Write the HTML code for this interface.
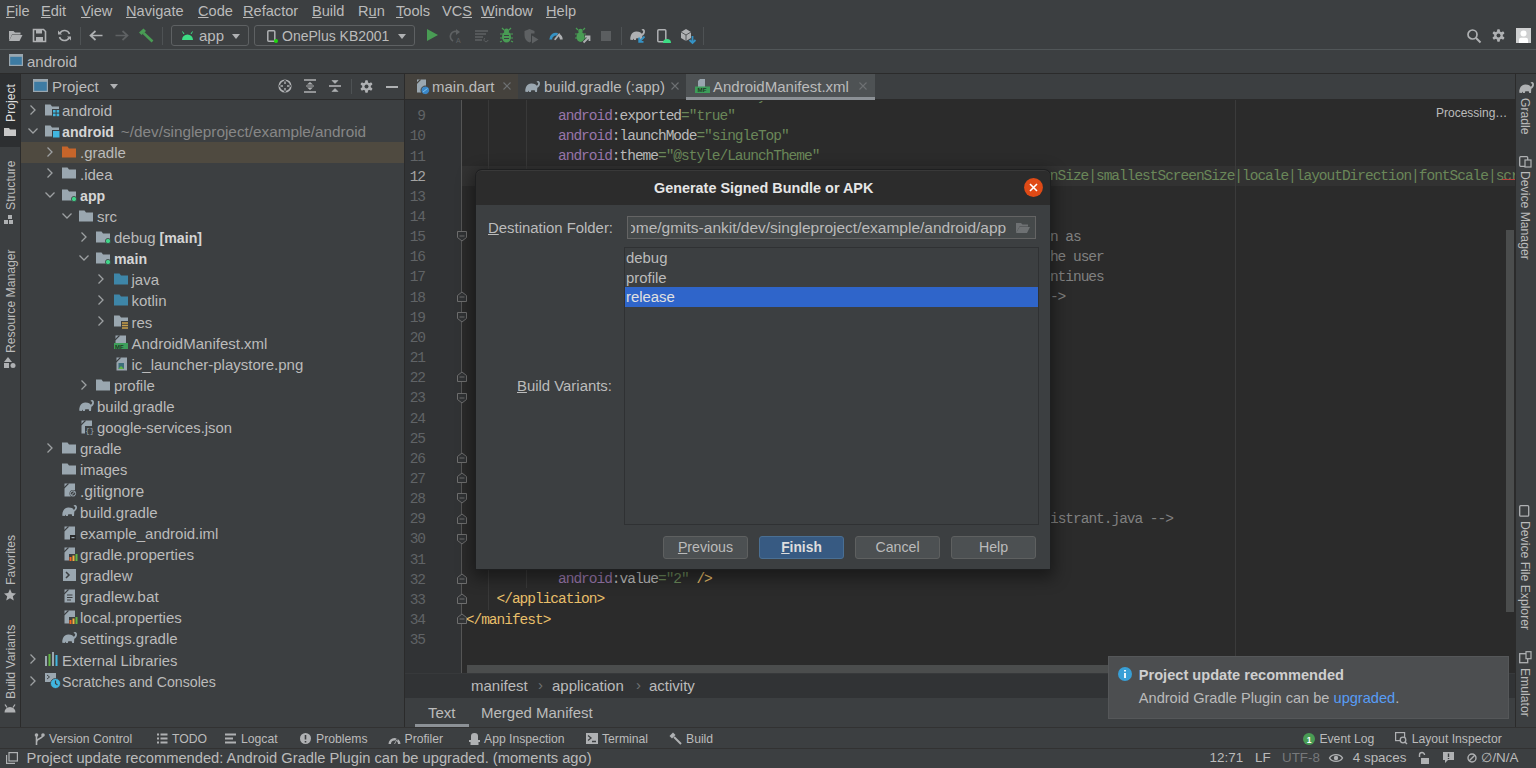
<!DOCTYPE html><html><head><meta charset="utf-8"><style>
*{box-sizing:border-box;margin:0;padding:0}
html,body{width:1536px;height:768px;overflow:hidden;background:#3c3f41}
body{position:relative;font-family:"Liberation Sans",sans-serif;font-size:15px;color:#bbbbbb}
.a{position:absolute;white-space:pre}
.m{font-family:"Liberation Mono",monospace}
svg{position:absolute;overflow:visible}
u{text-decoration:underline;text-underline-offset:0.5px;text-decoration-thickness:1px}
</style></head><body>
<div class="a" style="left:6px;top:1.00px;line-height:20px;font-size:14.6px;"><u>F</u>ile</div>
<div class="a" style="left:41px;top:1.00px;line-height:20px;font-size:14.6px;"><u>E</u>dit</div>
<div class="a" style="left:81px;top:1.00px;line-height:20px;font-size:14.6px;"><u>V</u>iew</div>
<div class="a" style="left:126px;top:1.00px;line-height:20px;font-size:14.6px;"><u>N</u>avigate</div>
<div class="a" style="left:198px;top:1.00px;line-height:20px;font-size:14.6px;"><u>C</u>ode</div>
<div class="a" style="left:243px;top:1.00px;line-height:20px;font-size:14.6px;"><u>R</u>efactor</div>
<div class="a" style="left:312px;top:1.00px;line-height:20px;font-size:14.6px;"><u>B</u>uild</div>
<div class="a" style="left:358px;top:1.00px;line-height:20px;font-size:14.6px;">R<u>u</u>n</div>
<div class="a" style="left:396px;top:1.00px;line-height:20px;font-size:14.6px;"><u>T</u>ools</div>
<div class="a" style="left:442px;top:1.00px;line-height:20px;font-size:14.6px;">VC<u>S</u></div>
<div class="a" style="left:481px;top:1.00px;line-height:20px;font-size:14.6px;"><u>W</u>indow</div>
<div class="a" style="left:546px;top:1.00px;line-height:20px;font-size:14.6px;"><u>H</u>elp</div>
<div class="a" style="left:0px;top:49px;width:1536px;height:1px;background:#515658;"></div>
<div class="a" style="left:0px;top:73px;width:1536px;height:1px;background:#2b2b2b;"></div>
<svg style="left:8px;top:29px" width="15" height="13" viewBox="0 0 15 13"><path d="M1 2h4.5l1.5 1.5h5.5v2H4L1 12z" fill="#afb1b3"/><path d="M4 6h10.5l-3 6H1z" fill="#afb1b3"/></svg>
<svg style="left:33px;top:29px" width="13" height="13" viewBox="0 0 13 13"><path d="M0.5 0.5h10l2 2v10h-12z" fill="none" stroke="#afb1b3" stroke-width="1.6"/><rect x="3" y="1" width="6" height="3.5" fill="#afb1b3"/><rect x="3" y="8" width="7" height="4.5" fill="#afb1b3"/></svg>
<svg style="left:58px;top:29px" width="13" height="13" viewBox="0 0 13 13"><path d="M11.5 5A5.2 5.2 0 0 0 2 4.2M1.5 8A5.2 5.2 0 0 0 11 8.8" fill="none" stroke="#afb1b3" stroke-width="1.6"/><path d="M0 1.5v4h4z M13 11.5v-4h-4z" fill="#afb1b3"/></svg>
<div class="a" style="left:80px;top:27px;width:1px;height:18px;background:#4e5254;"></div>
<svg style="left:89px;top:30px" width="14" height="11" viewBox="0 0 14 11"><path d="M13.5 5.5H2M6.5 1L1.5 5.5L6.5 10" fill="none" stroke="#afb1b3" stroke-width="1.7"/></svg>
<svg style="left:115px;top:30px" width="14" height="11" viewBox="0 0 14 11"><path d="M0.5 5.5H12M7.5 1L12.5 5.5L7.5 10" fill="none" stroke="#5e6163" stroke-width="1.7"/></svg>
<svg style="left:138px;top:28px" width="16" height="15" viewBox="0 0 16 15"><path d="M1 4.5L5.5 0.5L8 3L3.5 7z" fill="#499c54"/><path d="M5.5 5L14.5 13.5" stroke="#499c54" stroke-width="2.6"/></svg>
<div class="a" style="left:162px;top:27px;width:1px;height:18px;background:#4e5254;"></div>
<div class="a" style="left:171px;top:25px;width:78px;height:21px;border:1px solid #5e6163;border-radius:3px"></div>
<svg style="left:181px;top:31px" width="13" height="9" viewBox="0 0 13 9"><path d="M1 9a5.5 5.5 0 0 1 11 0z" fill="#3ddc84"/><path d="M3 3L1.5 0.5M10 3L11.5 0.5" stroke="#3ddc84" stroke-width="1"/></svg>
<div class="a" style="left:199px;top:26.00px;line-height:20px;font-size:15px;">app</div>
<svg style="left:231.5px;top:33.5px" width="8" height="5" viewBox="0 0 8 5"><path d="M0 0h8L4 5z" fill="#afb1b3"/></svg>
<div class="a" style="left:254px;top:25px;width:161px;height:21px;border:1px solid #5e6163;border-radius:3px"></div>
<svg style="left:267px;top:30px" width="9" height="13" viewBox="0 0 9 13"><rect x="0.8" y="0.8" width="7" height="10.5" rx="1" fill="none" stroke="#afb1b3" stroke-width="1.5"/><circle cx="9" cy="11" r="2" fill="#1fd80f"/></svg>
<div class="a" style="left:282px;top:26.00px;line-height:20px;font-size:14px;">OnePlus KB2001</div>
<svg style="left:397.5px;top:33.5px" width="8" height="5" viewBox="0 0 8 5"><path d="M0 0h8L4 5z" fill="#afb1b3"/></svg>
<svg style="left:427px;top:29px" width="11" height="12" viewBox="0 0 11 12"><path d="M0 0L11 6L0 12z" fill="#499c54"/></svg>
<svg style="left:449px;top:29px" width="14" height="14" viewBox="0 0 14 14"><path d="M9 3A5 5 0 1 0 4 12" fill="none" stroke="#5e6163" stroke-width="1.6"/><path d="M7 0l4 3-4 3z" fill="#5e6163"/><text x="7" y="14" font-size="7" fill="#5e6163" font-family="Liberation Sans">A</text></svg>
<svg style="left:475px;top:30px" width="14" height="12" viewBox="0 0 14 12"><path d="M0 1h13M0 4h11M0 7h8M0 10h7" stroke="#5e6163" stroke-width="1.4"/><path d="M10 8a2 2 0 1 0 3 2" stroke="#5e6163" fill="none"/></svg>
<svg style="left:500px;top:28px" width="13" height="15" viewBox="0 0 13 15"><ellipse cx="6.5" cy="9" rx="4.5" ry="5.5" fill="#499c54"/><circle cx="6.5" cy="3" r="2.5" fill="#499c54"/><path d="M0 6h13M0 10h13M0 14l2-1M13 14l-2-1M2 0l2 2M11 0l-2 2" stroke="#499c54" stroke-width="1.2"/><path d="M4 7.5h5M4 10.5h5" stroke="#3c3f41" stroke-width="1.2"/></svg>
<svg style="left:524px;top:29px" width="15" height="15" viewBox="0 0 15 15"><path d="M0.5 2L5.5 0L10.5 2V4.5H7V12.5L5.5 13.5C2 12 0.5 9.5 0.5 6z" fill="#5e6163"/><path d="M8 6.5L14.5 10.5L8 14.5z" fill="#5e6163"/></svg>
<svg style="left:549px;top:30px" width="14" height="10" viewBox="0 0 14 10"><path d="M0.3 9.5A6.7 6.7 0 0 1 9 3.1L8 5.7A3.9 3.9 0 0 0 3.1 9.5z" fill="#3592c4"/><path d="M10.6 4A6.7 6.7 0 0 1 13.7 9.5H10.9A3.9 3.9 0 0 0 9.6 6.6z" fill="#afb1b3"/><path d="M6.2 9.3L10.2 4.2" stroke="#afb1b3" stroke-width="1.8" stroke-linecap="round"/></svg>
<svg style="left:575px;top:28px" width="15" height="15" viewBox="0 0 15 15"><ellipse cx="5.5" cy="9" rx="4" ry="5" fill="#499c54"/><circle cx="5.5" cy="3" r="2.3" fill="#499c54"/><path d="M0 6h11M0 10h11M1 0l2 2M10 0l-2 2" stroke="#499c54" stroke-width="1.2"/><path d="M8.5 14.5L14 9M10 8.5h4.5V13" stroke="#afb1b3" stroke-width="1.8" fill="none"/></svg>
<div class="a" style="left:601px;top:31px;width:10px;height:10px;background:#5b5e60;"></div>
<div class="a" style="left:621px;top:27px;width:1px;height:18px;background:#4e5254;"></div>
<svg style="left:630px;top:29px" width="16" height="14" viewBox="0 0 16 14"><path d="M0.3 10.8C0.1 6.5 2 2.8 6.2 2.6C9.5 2.5 11 3.5 12.4 5.5L12 11H10.2L9.7 9.3H6.3L5.8 11H4L3.5 9.5L2.8 11z" fill="#afb1b3"/><path d="M11.2 6.3C13.4 5.2 14.3 3.6 14.1 2C13.9 0.7 12.8 0.5 12.1 1.3" fill="none" stroke="#afb1b3" stroke-width="1.7"/><path d="M14.5 7.5l-5 5M9.2 8.5V12.8h4.3" stroke="#3592c4" stroke-width="1.8" fill="none"/></svg>
<svg style="left:657px;top:29px" width="14" height="14" viewBox="0 0 14 14"><rect x="0.8" y="0.8" width="8" height="12" rx="1" fill="none" stroke="#afb1b3" stroke-width="1.5"/><path d="M6 14a4 4 0 0 1 8 0z" fill="#3ddc84"/></svg>
<svg style="left:680px;top:28px" width="16" height="16" viewBox="0 0 16 16"><path d="M1 4l5-3 5 3v6l-5 3-5-3z" fill="#afb1b3"/><path d="M1 4l5 3 5-3M6 7v6" stroke="#3c3f41" stroke-width="0.8" fill="none"/><path d="M12.5 8v7M9.5 12l3 3 3-3" stroke="#3592c4" stroke-width="1.8" fill="none"/></svg>
<div class="a" style="left:703px;top:27px;width:1px;height:18px;background:#4e5254;"></div>
<svg style="left:1467px;top:29px" width="14" height="14" viewBox="0 0 14 14"><circle cx="5.5" cy="5.5" r="4.5" fill="none" stroke="#afb1b3" stroke-width="1.7"/><path d="M9 9l4.5 4.5" stroke="#afb1b3" stroke-width="2"/></svg>
<svg style="left:1492px;top:29px" width="13" height="13" viewBox="0 0 13 13"><circle cx="6.5" cy="6.5" r="4.3" fill="#afb1b3"/><g fill="#afb1b3"><rect x="5.1" y="0.2" width="2.8" height="12.6" rx="0.8"/><rect x="5.1" y="0.2" width="2.8" height="12.6" rx="0.8" transform="rotate(60 6.5 6.5)"/><rect x="5.1" y="0.2" width="2.8" height="12.6" rx="0.8" transform="rotate(120 6.5 6.5)"/></g><circle cx="6.5" cy="6.5" r="2" fill="#3c3f41"/></svg>
<svg style="left:1516px;top:28px" width="15" height="15" viewBox="0 0 15 15"><rect width="15" height="15" fill="#cfd0d1"/><circle cx="7.5" cy="5.5" r="3" fill="#fff"/><path d="M3 15V11.8Q3 9.8 5 9.8H10Q12 9.8 12 11.8V15z" fill="#fff"/></svg>
<svg style="left:9px;top:54px" width="14" height="12" viewBox="0 0 14 12"><rect x="0.6" y="0.6" width="12.8" height="10.8" fill="#3d7ba3" stroke="#9aa7b0" stroke-width="1.2"/><rect x="1" y="1" width="12" height="1.8" fill="#9aa7b0"/></svg>
<div class="a" style="left:27px;top:52.00px;line-height:20px;font-size:15px;">android</div>
<div class="a" style="left:20px;top:74px;width:1px;height:653px;background:#2b2b2b;"></div>
<div class="a" style="left:0px;top:74px;width:20px;height:73px;background:#2d2f31;"></div>
<div class="a" style="left:11px;top:122px;transform-origin:0 0;transform:rotate(-90deg);font-size:12.2px;line-height:16px;color:#dddddd;margin-top:0"><div style="position:relative;top:-8px">Project</div></div>
<svg style="left:4px;top:128px" width="12" height="8" viewBox="0 0 12 8"><path d="M0 0h5l1 1.5h6V8H0z" fill="#c8c8c8"/></svg>
<div class="a" style="left:11px;top:209.5px;transform-origin:0 0;transform:rotate(-90deg);font-size:12.2px;line-height:16px;color:#bbbbbb;margin-top:0"><div style="position:relative;top:-8px">Structure</div></div>
<svg style="left:4px;top:215px" width="12" height="9" viewBox="0 0 12 9"><rect x="4" y="0" width="4" height="4" fill="#afb1b3"/><rect x="0" y="5" width="4" height="4" fill="#afb1b3"/><rect x="5" y="5" width="4" height="4" fill="#afb1b3"/></svg>
<div class="a" style="left:11px;top:352.5px;transform-origin:0 0;transform:rotate(-90deg);font-size:12.2px;line-height:16px;color:#bbbbbb;margin-top:0"><div style="position:relative;top:-8px">Resource Manager</div></div>
<svg style="left:4px;top:357px" width="12" height="11" viewBox="0 0 12 11"><path d="M4 0l4 5H0z" fill="#afb1b3"/><rect x="0" y="6" width="5" height="5" fill="#afb1b3"/><circle cx="9" cy="8.5" r="2.5" fill="#afb1b3"/></svg>
<div class="a" style="left:11px;top:585px;transform-origin:0 0;transform:rotate(-90deg);font-size:12.2px;line-height:16px;color:#bbbbbb;margin-top:0"><div style="position:relative;top:-8px">Favorites</div></div>
<svg style="left:4px;top:589px" width="12" height="12" viewBox="0 0 12 12"><path d="M6 0l1.8 4 4.2.4-3.2 2.8 1 4.3L6 9.3 2.2 11.5l1-4.3L0 4.4l4.2-.4z" fill="#afb1b3"/></svg>
<div class="a" style="left:11px;top:698.5px;transform-origin:0 0;transform:rotate(-90deg);font-size:12.2px;line-height:16px;color:#bbbbbb;margin-top:0"><div style="position:relative;top:-8px">Build Variants</div></div>
<svg style="left:4px;top:704px" width="12" height="9" viewBox="0 0 12 9"><path d="M0.5 8.5a5.5 5.5 0 0 1 11 0z" fill="#afb1b3"/><path d="M1 0.5l2 3M11 0.5l-2 3" stroke="#afb1b3" stroke-width="1.3"/></svg>
<div class="a" style="left:404px;top:74px;width:1px;height:653px;background:#2b2b2b;"></div>
<div class="a" style="left:21px;top:99px;width:383px;height:1px;background:#2b2b2b;"></div>
<svg style="left:33px;top:79px" width="15" height="13" viewBox="0 0 15 13"><rect x="0.6" y="0.6" width="13.8" height="11.8" fill="#3d7ba3" stroke="#9aa7b0" stroke-width="1.2"/><rect x="1" y="1" width="13" height="1.8" fill="#9aa7b0"/></svg>
<div class="a" style="left:52px;top:76.50px;line-height:20px;font-size:15px;">Project</div>
<svg style="left:110px;top:84px" width="8" height="5" viewBox="0 0 8 5"><path d="M0 0h8L4 5z" fill="#afb1b3"/></svg>
<svg style="left:278px;top:79px" width="14" height="14" viewBox="0 0 14 14"><circle cx="7" cy="7" r="5.8" fill="none" stroke="#afb1b3" stroke-width="1.6"/><path d="M7 1v4.2M7 8.8v4.2M1 7h4.2M8.8 7h4.2" stroke="#3c3f41" stroke-width="1.6"/><path d="M7 2.5v2.5M7 9v2.5M2.5 7h2.5M9 7h2.5" stroke="#afb1b3" stroke-width="1.4"/></svg>
<svg style="left:303px;top:79px" width="14" height="14" viewBox="0 0 14 14"><path d="M1 1h12M1 13h12" stroke="#afb1b3" stroke-width="1.6"/><path d="M4 5.5l3-2.5 3 2.5zM4 8.5l3 2.5 3-2.5z" fill="#afb1b3"/><path d="M3 7h8" stroke="#afb1b3"/></svg>
<svg style="left:328px;top:79px" width="14" height="14" viewBox="0 0 14 14"><path d="M1 7h12" stroke="#afb1b3" stroke-width="1.6"/><path d="M4 1.5l3 3 3-3zM4 12.5l3-3 3 3z" fill="#afb1b3" stroke="#afb1b3" stroke-width="0.6"/></svg>
<div class="a" style="left:351px;top:79px;width:1px;height:15px;background:#4e5254;"></div>
<svg style="left:360px;top:80px" width="13" height="13" viewBox="0 0 13 13"><circle cx="6.5" cy="6.5" r="4.3" fill="#afb1b3"/><g fill="#afb1b3"><rect x="5.1" y="0.2" width="2.8" height="12.6" rx="0.8"/><rect x="5.1" y="0.2" width="2.8" height="12.6" rx="0.8" transform="rotate(60 6.5 6.5)"/><rect x="5.1" y="0.2" width="2.8" height="12.6" rx="0.8" transform="rotate(120 6.5 6.5)"/></g><circle cx="6.5" cy="6.5" r="2" fill="#3c3f41"/></svg>
<div class="a" style="left:386px;top:86px;width:12px;height:2px;background:#afb1b3;"></div>
<div class="a" style="left:21px;top:142px;width:383px;height:21px;background:#4f4a40;"></div>
<svg style="left:30px;top:105.00px" width="6" height="10" viewBox="0 0 6 10"><path d="M0.5 0.5L5 5L0.5 9.5" fill="none" stroke="#9da0a2" stroke-width="1.3"/></svg>
<svg style="left:45px;top:104.00px" width="14" height="12" viewBox="0 0 14 12"><path d="M0 0.5h5.5l1.5 2H14V11.5H0z" fill="#9aa7b0"/></svg>
<svg style="left:52px;top:109.00px" width="8" height="8"><rect x="0" y="0" width="8" height="8" fill="#3c3f41"/><rect x="1" y="1" width="2.6" height="2.6" fill="#40b6e0"/><rect x="4.6" y="1" width="2.6" height="2.6" fill="#40b6e0"/><rect x="1" y="4.6" width="2.6" height="2.6" fill="#40b6e0"/><rect x="4.6" y="4.6" width="2.6" height="2.6" fill="#40b6e0"/></svg>
<div class="a" style="left:62px;top:101.20px;line-height:20px;font-size:15px;">android</div>
<svg style="left:28px;top:128.13px" width="10" height="6" viewBox="0 0 10 6"><path d="M0.5 0.5L5 5L9.5 0.5" fill="none" stroke="#9da0a2" stroke-width="1.3"/></svg>
<svg style="left:45px;top:125.13px" width="14" height="12" viewBox="0 0 14 12"><path d="M0 0.5h5.5l1.5 2H14V11.5H0z" fill="#9aa7b0"/></svg>
<svg style="left:52px;top:130.13px" width="8" height="8"><rect x="0" y="0" width="8" height="8" fill="#3c3f41"/><rect x="1" y="1" width="6.5" height="6.5" fill="#40b6e0"/></svg>
<div class="a" style="left:62px;top:122.33px;line-height:20px;font-size:15px;"><b style="color:#d5d5d5;font-size:14.2px">android</b><span style="position:absolute;left:58.8px;top:0;color:#878787;font-size:15.3px">~/dev/singleproject/example/android</span></div>
<svg style="left:47px;top:147.26px" width="6" height="10" viewBox="0 0 6 10"><path d="M0.5 0.5L5 5L0.5 9.5" fill="none" stroke="#9da0a2" stroke-width="1.3"/></svg>
<svg style="left:62px;top:146.26px" width="14" height="12" viewBox="0 0 14 12"><path d="M0 0.5h5.5l1.5 2H14V11.5H0z" fill="#c7652a"/></svg>
<div class="a" style="left:80px;top:143.46px;line-height:20px;font-size:15px;">.gradle</div>
<svg style="left:47px;top:168.39px" width="6" height="10" viewBox="0 0 6 10"><path d="M0.5 0.5L5 5L0.5 9.5" fill="none" stroke="#9da0a2" stroke-width="1.3"/></svg>
<svg style="left:62px;top:167.39px" width="14" height="12" viewBox="0 0 14 12"><path d="M0 0.5h5.5l1.5 2H14V11.5H0z" fill="#9aa7b0"/></svg>
<div class="a" style="left:80px;top:164.59px;line-height:20px;font-size:15px;">.idea</div>
<svg style="left:45px;top:191.52px" width="10" height="6" viewBox="0 0 10 6"><path d="M0.5 0.5L5 5L9.5 0.5" fill="none" stroke="#9da0a2" stroke-width="1.3"/></svg>
<svg style="left:62px;top:188.52px" width="14" height="12" viewBox="0 0 14 12"><path d="M0 0.5h5.5l1.5 2H14V11.5H0z" fill="#9aa7b0"/></svg>
<svg style="left:71px;top:195.52px" width="6" height="6"><circle cx="3" cy="3" r="2.6" fill="#3fd68a" stroke="#3c3f41" stroke-width="0.8"/></svg>
<div class="a" style="left:80px;top:185.72px;line-height:20px;font-size:15px;"><b style="color:#d5d5d5;font-size:14.2px">app</b></div>
<svg style="left:62px;top:212.65px" width="10" height="6" viewBox="0 0 10 6"><path d="M0.5 0.5L5 5L9.5 0.5" fill="none" stroke="#9da0a2" stroke-width="1.3"/></svg>
<svg style="left:79px;top:209.65px" width="14" height="12" viewBox="0 0 14 12"><path d="M0 0.5h5.5l1.5 2H14V11.5H0z" fill="#9aa7b0"/></svg>
<div class="a" style="left:97px;top:206.85px;line-height:20px;font-size:15px;">src</div>
<svg style="left:81px;top:231.78px" width="6" height="10" viewBox="0 0 6 10"><path d="M0.5 0.5L5 5L0.5 9.5" fill="none" stroke="#9da0a2" stroke-width="1.3"/></svg>
<svg style="left:96px;top:230.78px" width="14" height="12" viewBox="0 0 14 12"><path d="M0 0.5h5.5l1.5 2H14V11.5H0z" fill="#9aa7b0"/></svg>
<svg style="left:105px;top:237.78px" width="6" height="6"><circle cx="3" cy="3" r="2.6" fill="#3fd68a" stroke="#3c3f41" stroke-width="0.8"/></svg>
<div class="a" style="left:114px;top:227.98px;line-height:20px;font-size:15px;">debug<b style="position:absolute;left:45.5px;top:0;color:#d5d5d5;font-size:14.2px">[main]</b></div>
<svg style="left:79px;top:254.91px" width="10" height="6" viewBox="0 0 10 6"><path d="M0.5 0.5L5 5L9.5 0.5" fill="none" stroke="#9da0a2" stroke-width="1.3"/></svg>
<svg style="left:96px;top:251.91px" width="14" height="12" viewBox="0 0 14 12"><path d="M0 0.5h5.5l1.5 2H14V11.5H0z" fill="#9aa7b0"/></svg>
<svg style="left:105px;top:258.91px" width="6" height="6"><circle cx="3" cy="3" r="2.6" fill="#3fd68a" stroke="#3c3f41" stroke-width="0.8"/></svg>
<div class="a" style="left:114px;top:249.11px;line-height:20px;font-size:15px;"><b style="color:#d5d5d5;font-size:14.2px">main</b></div>
<svg style="left:98px;top:274.04px" width="6" height="10" viewBox="0 0 6 10"><path d="M0.5 0.5L5 5L0.5 9.5" fill="none" stroke="#9da0a2" stroke-width="1.3"/></svg>
<svg style="left:114px;top:273.04px" width="14" height="12" viewBox="0 0 14 12"><path d="M0 0.5h5.5l1.5 2H14V11.5H0z" fill="#3e86a8"/></svg>
<div class="a" style="left:131.5px;top:270.24px;line-height:20px;font-size:15px;">java</div>
<svg style="left:98px;top:295.17px" width="6" height="10" viewBox="0 0 6 10"><path d="M0.5 0.5L5 5L0.5 9.5" fill="none" stroke="#9da0a2" stroke-width="1.3"/></svg>
<svg style="left:114px;top:294.17px" width="14" height="12" viewBox="0 0 14 12"><path d="M0 0.5h5.5l1.5 2H14V11.5H0z" fill="#3e86a8"/></svg>
<div class="a" style="left:131.5px;top:291.37px;line-height:20px;font-size:15px;">kotlin</div>
<svg style="left:98px;top:316.30px" width="6" height="10" viewBox="0 0 6 10"><path d="M0.5 0.5L5 5L0.5 9.5" fill="none" stroke="#9da0a2" stroke-width="1.3"/></svg>
<svg style="left:114px;top:315.30px" width="14" height="12" viewBox="0 0 14 12"><path d="M0 0.5h5.5l1.5 2H14V11.5H0z" fill="#9aa7b0"/></svg>
<svg style="left:121px;top:321.30px" width="8" height="8"><rect x="0" y="0" width="8" height="8" fill="#3c3f41"/><path d="M1 2h6M1 4.5h6M1 7h6" stroke="#c9a04a" stroke-width="1.6"/></svg>
<div class="a" style="left:131.5px;top:312.50px;line-height:20px;font-size:15px;">res</div>
<svg style="left:114px;top:335.43px" width="14" height="14" viewBox="0 0 14 14"><path d="M1.5 0.5H12V13.5H1.5z" fill="#9aa7b0"/><path d="M1 5L5.5 0.5" stroke="#3c3f41" stroke-width="1.1"/><rect x="0" y="8" width="14" height="6" fill="#3d9e5a"/><text x="1" y="13.5" font-size="6" fill="#1e3a24" font-family="Liberation Sans" font-weight="bold">MF</text></svg>
<div class="a" style="left:131.5px;top:333.63px;line-height:20px;font-size:15px;">AndroidManifest.xml</div>
<svg style="left:115px;top:356.56px" width="14" height="14" viewBox="0 0 14 14"><path d="M1.5 0.5H12V13.5H1.5z" fill="#9aa7b0"/><path d="M1 5L5.5 0.5" stroke="#3c3f41" stroke-width="1.1"/><rect x="3.5" y="6" width="5.5" height="6" fill="#3c6e7a"/><path d="M3.5 12l2.5-3 3 3z" fill="#62b543"/></svg>
<div class="a" style="left:131.5px;top:354.76px;line-height:20px;font-size:15px;">ic_launcher-playstore.png</div>
<svg style="left:81px;top:379.69px" width="6" height="10" viewBox="0 0 6 10"><path d="M0.5 0.5L5 5L0.5 9.5" fill="none" stroke="#9da0a2" stroke-width="1.3"/></svg>
<svg style="left:96px;top:378.69px" width="14" height="12" viewBox="0 0 14 12"><path d="M0 0.5h5.5l1.5 2H14V11.5H0z" fill="#9aa7b0"/></svg>
<div class="a" style="left:114px;top:375.89px;line-height:20px;font-size:15px;">profile</div>
<svg style="left:78.5px;top:399.82px" width="16" height="12" viewBox="0 0 16 12"><path d="M0.3 10.8C0.1 6.5 2 2.8 6.2 2.6C9.5 2.5 11 3.5 12.4 5.5L12 11H10.2L9.7 9.3H6.3L5.8 11H4L3.5 9.5L2.8 11z" fill="#9aa7b0"/><path d="M11.2 6.3C13.4 5.2 14.3 3.6 14.1 2C13.9 0.7 12.8 0.5 12.1 1.3" fill="none" stroke="#9aa7b0" stroke-width="1.7"/></svg>
<div class="a" style="left:97px;top:397.02px;line-height:20px;font-size:15px;">build.gradle</div>
<svg style="left:80px;top:419.95px" width="14" height="14" viewBox="0 0 14 14"><path d="M1.5 0.5H12V13.5H1.5z" fill="#9aa7b0"/><path d="M1 5L5.5 0.5" stroke="#3c3f41" stroke-width="1.1"/><rect x="5" y="6" width="9" height="8" fill="#3c3f41"/><text x="5.2" y="13.2" font-size="7.5" fill="#9aa7b0" font-family="Liberation Mono">{}</text></svg>
<div class="a" style="left:97px;top:418.15px;line-height:20px;font-size:14.8px;">google-services.json</div>
<svg style="left:47px;top:443.08px" width="6" height="10" viewBox="0 0 6 10"><path d="M0.5 0.5L5 5L0.5 9.5" fill="none" stroke="#9da0a2" stroke-width="1.3"/></svg>
<svg style="left:62px;top:442.08px" width="14" height="12" viewBox="0 0 14 12"><path d="M0 0.5h5.5l1.5 2H14V11.5H0z" fill="#9aa7b0"/></svg>
<div class="a" style="left:80px;top:439.28px;line-height:20px;font-size:15px;">gradle</div>
<svg style="left:62px;top:463.21px" width="14" height="12" viewBox="0 0 14 12"><path d="M0 0.5h5.5l1.5 2H14V11.5H0z" fill="#9aa7b0"/></svg>
<div class="a" style="left:80px;top:460.41px;line-height:20px;font-size:14.7px;">images</div>
<svg style="left:63px;top:483.34px" width="14" height="14" viewBox="0 0 14 14"><path d="M1.5 0.5H12V13.5H1.5z" fill="#9aa7b0"/><path d="M1 5L5.5 0.5" stroke="#3c3f41" stroke-width="1.1"/><circle cx="10" cy="10.5" r="3.5" fill="#3c3f41"/><circle cx="10" cy="10.5" r="2.6" fill="none" stroke="#9aa7b0" stroke-width="1"/><path d="M8 12.5l4-4" stroke="#9aa7b0"/></svg>
<div class="a" style="left:80px;top:481.54px;line-height:20px;font-size:15.6px;">.gitignore</div>
<svg style="left:61.5px;top:505.47px" width="16" height="12" viewBox="0 0 16 12"><path d="M0.3 10.8C0.1 6.5 2 2.8 6.2 2.6C9.5 2.5 11 3.5 12.4 5.5L12 11H10.2L9.7 9.3H6.3L5.8 11H4L3.5 9.5L2.8 11z" fill="#9aa7b0"/><path d="M11.2 6.3C13.4 5.2 14.3 3.6 14.1 2C13.9 0.7 12.8 0.5 12.1 1.3" fill="none" stroke="#9aa7b0" stroke-width="1.7"/></svg>
<div class="a" style="left:80px;top:502.67px;line-height:20px;font-size:15px;">build.gradle</div>
<svg style="left:63px;top:525.60px" width="14" height="14" viewBox="0 0 14 14"><path d="M1.5 0.5H12V13.5H1.5z" fill="#9aa7b0"/><path d="M1 5L5.5 0.5" stroke="#3c3f41" stroke-width="1.1"/><rect x="7" y="9" width="6" height="5" fill="#2b2b2b"/><rect x="8.5" y="11" width="3" height="1.2" fill="#9aa7b0"/></svg>
<div class="a" style="left:80px;top:523.80px;line-height:20px;font-size:15px;">example_android.iml</div>
<svg style="left:63px;top:546.73px" width="14" height="14" viewBox="0 0 14 14"><path d="M1.5 0.5H12V13.5H1.5z" fill="#9aa7b0"/><path d="M1 5L5.5 0.5" stroke="#3c3f41" stroke-width="1.1"/><rect x="6" y="7" width="9" height="7" fill="#3c3f41"/><rect x="6.5" y="10" width="2" height="4" fill="#f26522"/><rect x="9.5" y="8.5" width="2" height="5.5" fill="#f4af3d"/><rect x="12.5" y="7" width="2" height="7" fill="#62b543"/></svg>
<div class="a" style="left:80px;top:544.93px;line-height:20px;font-size:15.2px;">gradle.properties</div>
<svg style="left:63px;top:568.86px" width="13" height="12"><rect width="13" height="12" fill="#9aa7b0"/><path d="M3 3l3 3-3 3" stroke="#3c3f41" stroke-width="1.5" fill="none"/></svg>
<div class="a" style="left:80px;top:566.06px;line-height:20px;font-size:15px;">gradlew</div>
<svg style="left:63px;top:588.99px" width="14" height="14" viewBox="0 0 14 14"><path d="M1.5 0.5H12V13.5H1.5z" fill="#9aa7b0"/><path d="M1 5L5.5 0.5" stroke="#3c3f41" stroke-width="1.1"/><path d="M4 6h5.5M4 8.5h5.5M4 11h4" stroke="#3c3f41" stroke-width="1.1"/></svg>
<div class="a" style="left:80px;top:587.19px;line-height:20px;font-size:15.4px;">gradlew.bat</div>
<svg style="left:63px;top:610.12px" width="14" height="14" viewBox="0 0 14 14"><path d="M1.5 0.5H12V13.5H1.5z" fill="#9aa7b0"/><path d="M1 5L5.5 0.5" stroke="#3c3f41" stroke-width="1.1"/><rect x="6" y="7" width="9" height="7" fill="#3c3f41"/><rect x="6.5" y="10" width="2" height="4" fill="#f26522"/><rect x="9.5" y="8.5" width="2" height="5.5" fill="#f4af3d"/><rect x="12.5" y="7" width="2" height="7" fill="#62b543"/></svg>
<div class="a" style="left:80px;top:608.32px;line-height:20px;font-size:15px;">local.properties</div>
<svg style="left:61.5px;top:632.25px" width="16" height="12" viewBox="0 0 16 12"><path d="M0.3 10.8C0.1 6.5 2 2.8 6.2 2.6C9.5 2.5 11 3.5 12.4 5.5L12 11H10.2L9.7 9.3H6.3L5.8 11H4L3.5 9.5L2.8 11z" fill="#9aa7b0"/><path d="M11.2 6.3C13.4 5.2 14.3 3.6 14.1 2C13.9 0.7 12.8 0.5 12.1 1.3" fill="none" stroke="#9aa7b0" stroke-width="1.7"/></svg>
<div class="a" style="left:80px;top:629.45px;line-height:20px;font-size:15px;">settings.gradle</div>
<svg style="left:30px;top:654.38px" width="6" height="10" viewBox="0 0 6 10"><path d="M0.5 0.5L5 5L0.5 9.5" fill="none" stroke="#9da0a2" stroke-width="1.3"/></svg>
<svg style="left:45px;top:652.38px" width="14" height="14"><rect x="0" y="4" width="2" height="10" fill="#9aa7b0"/><rect x="3.5" y="2" width="2" height="12" fill="#62b543"/><rect x="7" y="0" width="2" height="14" fill="#9aa7b0"/><rect x="10.5" y="3" width="2" height="11" fill="#40b6e0"/></svg>
<div class="a" style="left:62px;top:650.58px;line-height:20px;font-size:14.85px;">External Libraries</div>
<svg style="left:30px;top:675.51px" width="6" height="10" viewBox="0 0 6 10"><path d="M0.5 0.5L5 5L0.5 9.5" fill="none" stroke="#9da0a2" stroke-width="1.3"/></svg>
<svg style="left:45px;top:672.51px" width="16" height="16"><rect x="0" y="0" width="11" height="9" fill="#9aa7b0"/><path d="M2 2l2.5 2L2 6" stroke="#3c3f41" stroke-width="1" fill="none"/><circle cx="10.5" cy="10.5" r="5" fill="#40b6e0" stroke="#3c3f41" stroke-width="0.8"/><path d="M10.5 7.5v3l2 1.5" stroke="#3c3f41" stroke-width="1.2" fill="none"/></svg>
<div class="a" style="left:62px;top:671.71px;line-height:20px;font-size:14.2px;">Scratches and Consoles</div>
<div class="a" style="left:405px;top:74px;width:1110px;height:25px;background:#3c3f41;"></div>
<div class="a" style="left:405px;top:99px;width:1110px;height:1px;background:#2b2b2b;"></div>
<div class="a" style="left:405px;top:74px;width:113px;height:25px;background:#45423d;"></div>
<svg style="left:416px;top:79px" width="14" height="16" viewBox="0 0 14 16"><path d="M1 0.5H10V13.5H1z" fill="#9aa7b0"/><path d="M0.5 4.5L4.5 0.5" stroke="#45423d" stroke-width="1.1"/><circle cx="9.3" cy="11.3" r="4.3" fill="#3b87c7" stroke="#45423d" stroke-width="1"/><path d="M7 13L11.5 9.5" stroke="#7cc2ee" stroke-width="1"/></svg>
<div class="a" style="left:432px;top:76.50px;line-height:20px;font-size:15px;">main.dart</div>
<svg style="left:503px;top:82px" width="8" height="8" viewBox="0 0 8 8"><path d="M0.5 0.5l7 7M7.5 0.5l-7 7" stroke="#6e7173" stroke-width="1.1"/></svg>
<svg style="left:525px;top:81px" width="16" height="12" viewBox="0 0 16 12"><path d="M0.3 10.8C0.1 6.5 2 2.8 6.2 2.6C9.5 2.5 11 3.5 12.4 5.5L12 11H10.2L9.7 9.3H6.3L5.8 11H4L3.5 9.5L2.8 11z" fill="#9aa7b0"/><path d="M11.2 6.3C13.4 5.2 14.3 3.6 14.1 2C13.9 0.7 12.8 0.5 12.1 1.3" fill="none" stroke="#9aa7b0" stroke-width="1.7"/></svg>
<div class="a" style="left:544px;top:76.50px;line-height:20px;font-size:15px;">build.gradle (:app)</div>
<svg style="left:671px;top:82px" width="8" height="8" viewBox="0 0 8 8"><path d="M0.5 0.5l7 7M7.5 0.5l-7 7" stroke="#6e7173" stroke-width="1.1"/></svg>
<div class="a" style="left:686px;top:74px;width:189px;height:25px;background:#4e5254;"></div>
<div class="a" style="left:686px;top:97px;width:189px;height:2.5px;background:#8c9196;"></div>
<svg style="left:695px;top:79px" width="15" height="14" viewBox="0 0 15 14"><path d="M5 0h5v8H3V2z" fill="#9aa7b0"/><rect x="0" y="7.5" width="15" height="6.5" fill="#3d9e5a"/><text x="2.5" y="13.2" font-size="6.2" fill="#1e3a24" font-family="Liberation Sans" font-weight="bold">MF</text></svg>
<div class="a" style="left:713px;top:76.50px;line-height:20px;font-size:15px;">AndroidManifest.xml</div>
<svg style="left:859px;top:82px" width="8" height="8" viewBox="0 0 8 8"><path d="M0.5 0.5l7 7M7.5 0.5l-7 7" stroke="#6e7173" stroke-width="1.1"/></svg>
<div class="a" style="left:405px;top:100px;width:1110px;height:573px;background:#2b2b2b;"></div>
<div class="a" style="left:405px;top:100px;width:57px;height:573px;background:#313335;"></div>
<div class="a" style="left:461px;top:100px;width:1px;height:573px;background:#555555;"></div>
<div class="a" style="left:462px;top:166px;width:1053px;height:20px;background:#323232;"></div>
<div class="a" style="left:488px;top:100px;width:1px;height:510px;background:#393939;"></div>
<div class="a" style="left:526px;top:100px;width:1px;height:488px;background:#393939;"></div>
<div class="a" style="left:1235px;top:100px;width:1px;height:573px;background:#3b3b3b;"></div>
<div class="a" style="left:0;top:0;width:1536px;height:768px;clip-path:inset(101px 21px 95px 405px)">
<div class="a m" style="left:558.02px;top:85.54px;line-height:20px;font-size:14.5px;letter-spacing:-1.015px;color:#a9b7c6"><span style="color:#9876aa">android</span><span style="color:#bababa">:</span><span style="color:#bababa">name</span><span style="color:#6a8759">=</span><span style="color:#6a8759">&quot;.MainActivity&quot;</span></div>
<div class="a m" style="left:558.02px;top:105.70px;line-height:20px;font-size:14.5px;letter-spacing:-1.015px;color:#a9b7c6"><span style="color:#9876aa">android</span><span style="color:#bababa">:</span><span style="color:#bababa">exported</span><span style="color:#6a8759">=</span><span style="color:#6a8759">&quot;true&quot;</span></div>
<div class="a m" style="left:558.02px;top:125.86px;line-height:20px;font-size:14.5px;letter-spacing:-1.015px;color:#a9b7c6"><span style="color:#9876aa">android</span><span style="color:#bababa">:</span><span style="color:#bababa">launchMode</span><span style="color:#6a8759">=</span><span style="color:#6a8759">&quot;singleTop&quot;</span></div>
<div class="a m" style="left:558.02px;top:146.01px;line-height:20px;font-size:14.5px;letter-spacing:-1.015px;color:#a9b7c6"><span style="color:#9876aa">android</span><span style="color:#bababa">:</span><span style="color:#bababa">theme</span><span style="color:#6a8759">=</span><span style="color:#6a8759">&quot;@style/LaunchTheme&quot;</span></div>
<div class="a m" style="left:1042.17px;top:166.17px;line-height:20px;font-size:14.5px;letter-spacing:-1.015px;color:#a9b7c6"><span style="color:#6a8759">enSize|smallestScreenSize|locale|layoutDirection|fontScale|screenLayout|density|uiMode&quot;</span></div>
<div class="a m" style="left:558.02px;top:186.32px;line-height:20px;font-size:14.5px;letter-spacing:-1.015px;color:#a9b7c6"><span style="color:#9876aa">android</span><span style="color:#bababa">:</span><span style="color:#bababa">hardwareAccelerated</span><span style="color:#6a8759">=</span><span style="color:#6a8759">&quot;true&quot;</span></div>
<div class="a m" style="left:558.02px;top:206.48px;line-height:20px;font-size:14.5px;letter-spacing:-1.015px;color:#a9b7c6"><span style="color:#9876aa">android</span><span style="color:#bababa">:</span><span style="color:#bababa">windowSoftInputMode</span><span style="color:#6a8759">=</span><span style="color:#6a8759">&quot;adjustResize&quot;</span><span style="color:#e8bf6a">&gt;</span></div>
<div class="a m" style="left:558.02px;top:226.64px;line-height:20px;font-size:14.5px;letter-spacing:-1.015px;color:#a9b7c6"><span style="color:#808080">&lt;!-- Specifies an Android theme to apply to this Activity as soon as</span></div>
<div class="a m" style="left:596.44px;top:246.79px;line-height:20px;font-size:14.5px;letter-spacing:-1.015px;color:#a9b7c6"><span style="color:#808080">the Android process has started. This theme is visible to the user</span></div>
<div class="a m" style="left:596.44px;top:266.95px;line-height:20px;font-size:14.5px;letter-spacing:-1.015px;color:#a9b7c6"><span style="color:#808080">while the Flutter UI initializes. After that, this theme continues</span></div>
<div class="a m" style="left:596.44px;top:287.10px;line-height:20px;font-size:14.5px;letter-spacing:-1.015px;color:#a9b7c6"><span style="color:#808080">to determine the Window background behind the Flutter UI. --&gt;</span></div>
<div class="a m" style="left:565.71px;top:508.82px;line-height:20px;font-size:14.5px;letter-spacing:-1.015px;color:#a9b7c6"><span style="color:#808080">This is used by the Flutter tool to generate GeneratedPluginRegistrant.java --&gt;</span></div>
<div class="a m" style="left:558.02px;top:549.13px;line-height:20px;font-size:14.5px;letter-spacing:-1.015px;color:#a9b7c6"><span style="color:#9876aa">android</span><span style="color:#bababa">:</span><span style="color:#bababa">name</span><span style="color:#6a8759">=</span><span style="color:#6a8759">&quot;flutterEmbedding&quot;</span></div>
<div class="a m" style="left:558.02px;top:569.29px;line-height:20px;font-size:14.5px;letter-spacing:-1.015px;color:#a9b7c6"><span style="color:#9876aa">android</span><span style="color:#bababa">:</span><span style="color:#bababa">value</span><span style="color:#6a8759">=</span><span style="color:#6a8759">&quot;2&quot;</span><span style="color:#e8bf6a"> /&gt;</span></div>
<div class="a m" style="left:496.54px;top:589.44px;line-height:20px;font-size:14.5px;letter-spacing:-1.015px;color:#a9b7c6"><span style="color:#e8bf6a">&lt;/application&gt;</span></div>
<div class="a m" style="left:465.80px;top:609.60px;line-height:20px;font-size:14.5px;letter-spacing:-1.015px;color:#a9b7c6"><span style="color:#e8bf6a">&lt;/manifest&gt;</span></div>
</div>
<div class="a" style="left:1501.5px;top:178.6px;width:13.5px;height:1.8px;background:#bc3f3c;"></div>
<div class="a m" style="left:405px;width:20px;text-align:right;top:106.20px;line-height:20px;font-size:14.5px;letter-spacing:-1.015px;color:#606366">9</div>
<div class="a m" style="left:405px;width:20px;text-align:right;top:126.36px;line-height:20px;font-size:14.5px;letter-spacing:-1.015px;color:#606366">10</div>
<div class="a m" style="left:405px;width:20px;text-align:right;top:146.51px;line-height:20px;font-size:14.5px;letter-spacing:-1.015px;color:#606366">11</div>
<div class="a m" style="left:405px;width:20px;text-align:right;top:166.67px;line-height:20px;font-size:14.5px;letter-spacing:-1.015px;color:#a4a3a3">12</div>
<div class="a m" style="left:405px;width:20px;text-align:right;top:186.82px;line-height:20px;font-size:14.5px;letter-spacing:-1.015px;color:#606366">13</div>
<div class="a m" style="left:405px;width:20px;text-align:right;top:206.98px;line-height:20px;font-size:14.5px;letter-spacing:-1.015px;color:#606366">14</div>
<div class="a m" style="left:405px;width:20px;text-align:right;top:227.14px;line-height:20px;font-size:14.5px;letter-spacing:-1.015px;color:#606366">15</div>
<div class="a m" style="left:405px;width:20px;text-align:right;top:247.29px;line-height:20px;font-size:14.5px;letter-spacing:-1.015px;color:#606366">16</div>
<div class="a m" style="left:405px;width:20px;text-align:right;top:267.45px;line-height:20px;font-size:14.5px;letter-spacing:-1.015px;color:#606366">17</div>
<div class="a m" style="left:405px;width:20px;text-align:right;top:287.60px;line-height:20px;font-size:14.5px;letter-spacing:-1.015px;color:#606366">18</div>
<div class="a m" style="left:405px;width:20px;text-align:right;top:307.76px;line-height:20px;font-size:14.5px;letter-spacing:-1.015px;color:#606366">19</div>
<div class="a m" style="left:405px;width:20px;text-align:right;top:327.92px;line-height:20px;font-size:14.5px;letter-spacing:-1.015px;color:#606366">20</div>
<div class="a m" style="left:405px;width:20px;text-align:right;top:348.07px;line-height:20px;font-size:14.5px;letter-spacing:-1.015px;color:#606366">21</div>
<div class="a m" style="left:405px;width:20px;text-align:right;top:368.23px;line-height:20px;font-size:14.5px;letter-spacing:-1.015px;color:#606366">22</div>
<div class="a m" style="left:405px;width:20px;text-align:right;top:388.38px;line-height:20px;font-size:14.5px;letter-spacing:-1.015px;color:#606366">23</div>
<div class="a m" style="left:405px;width:20px;text-align:right;top:408.54px;line-height:20px;font-size:14.5px;letter-spacing:-1.015px;color:#606366">24</div>
<div class="a m" style="left:405px;width:20px;text-align:right;top:428.70px;line-height:20px;font-size:14.5px;letter-spacing:-1.015px;color:#606366">25</div>
<div class="a m" style="left:405px;width:20px;text-align:right;top:448.85px;line-height:20px;font-size:14.5px;letter-spacing:-1.015px;color:#606366">26</div>
<div class="a m" style="left:405px;width:20px;text-align:right;top:469.01px;line-height:20px;font-size:14.5px;letter-spacing:-1.015px;color:#606366">27</div>
<div class="a m" style="left:405px;width:20px;text-align:right;top:489.16px;line-height:20px;font-size:14.5px;letter-spacing:-1.015px;color:#606366">28</div>
<div class="a m" style="left:405px;width:20px;text-align:right;top:509.32px;line-height:20px;font-size:14.5px;letter-spacing:-1.015px;color:#606366">29</div>
<div class="a m" style="left:405px;width:20px;text-align:right;top:529.48px;line-height:20px;font-size:14.5px;letter-spacing:-1.015px;color:#606366">30</div>
<div class="a m" style="left:405px;width:20px;text-align:right;top:549.63px;line-height:20px;font-size:14.5px;letter-spacing:-1.015px;color:#606366">31</div>
<div class="a m" style="left:405px;width:20px;text-align:right;top:569.79px;line-height:20px;font-size:14.5px;letter-spacing:-1.015px;color:#606366">32</div>
<div class="a m" style="left:405px;width:20px;text-align:right;top:589.94px;line-height:20px;font-size:14.5px;letter-spacing:-1.015px;color:#606366">33</div>
<div class="a m" style="left:405px;width:20px;text-align:right;top:610.10px;line-height:20px;font-size:14.5px;letter-spacing:-1.015px;color:#606366">34</div>
<div class="a m" style="left:405px;width:20px;text-align:right;top:630.26px;line-height:20px;font-size:14.5px;letter-spacing:-1.015px;color:#606366">35</div>
<svg style="left:456.5px;top:231.34px" width="10" height="10"><path d="M0.5 0.5h9v6l-4.5 3.5-4.5-3.5z" fill="#313335" stroke="#6e6e6e"/><path d="M2.5 5h5" stroke="#6e6e6e"/></svg>
<svg style="left:456.5px;top:291.80px" width="10" height="10"><path d="M0.5 9.5h9v-6l-4.5-3.5-4.5 3.5z" fill="#313335" stroke="#6e6e6e"/><path d="M2.5 5h5" stroke="#6e6e6e"/></svg>
<svg style="left:456.5px;top:311.96px" width="10" height="10"><path d="M0.5 0.5h9v6l-4.5 3.5-4.5-3.5z" fill="#313335" stroke="#6e6e6e"/><path d="M2.5 5h5" stroke="#6e6e6e"/></svg>
<svg style="left:456.5px;top:372.43px" width="10" height="10"><path d="M0.5 9.5h9v-6l-4.5-3.5-4.5 3.5z" fill="#313335" stroke="#6e6e6e"/><path d="M2.5 5h5" stroke="#6e6e6e"/></svg>
<svg style="left:456.5px;top:392.58px" width="10" height="10"><path d="M0.5 0.5h9v6l-4.5 3.5-4.5-3.5z" fill="#313335" stroke="#6e6e6e"/><path d="M2.5 5h5" stroke="#6e6e6e"/></svg>
<svg style="left:456.5px;top:453.05px" width="10" height="10"><path d="M0.5 9.5h9v-6l-4.5-3.5-4.5 3.5z" fill="#313335" stroke="#6e6e6e"/><path d="M2.5 5h5" stroke="#6e6e6e"/></svg>
<svg style="left:456.5px;top:473.21px" width="10" height="10"><path d="M0.5 9.5h9v-6l-4.5-3.5-4.5 3.5z" fill="#313335" stroke="#6e6e6e"/><path d="M2.5 5h5" stroke="#6e6e6e"/></svg>
<svg style="left:456.5px;top:493.36px" width="10" height="10"><path d="M0.5 0.5h9v6l-4.5 3.5-4.5-3.5z" fill="#313335" stroke="#6e6e6e"/><path d="M2.5 5h5" stroke="#6e6e6e"/></svg>
<svg style="left:456.5px;top:513.52px" width="10" height="10"><path d="M0.5 9.5h9v-6l-4.5-3.5-4.5 3.5z" fill="#313335" stroke="#6e6e6e"/><path d="M2.5 5h5" stroke="#6e6e6e"/></svg>
<svg style="left:456.5px;top:533.68px" width="10" height="10"><path d="M0.5 0.5h9v6l-4.5 3.5-4.5-3.5z" fill="#313335" stroke="#6e6e6e"/><path d="M2.5 5h5" stroke="#6e6e6e"/></svg>
<svg style="left:456.5px;top:573.99px" width="10" height="10"><path d="M0.5 9.5h9v-6l-4.5-3.5-4.5 3.5z" fill="#313335" stroke="#6e6e6e"/><path d="M2.5 5h5" stroke="#6e6e6e"/></svg>
<svg style="left:456.5px;top:594.14px" width="10" height="10"><path d="M0.5 9.5h9v-6l-4.5-3.5-4.5 3.5z" fill="#313335" stroke="#6e6e6e"/><path d="M2.5 5h5" stroke="#6e6e6e"/></svg>
<svg style="left:456.5px;top:614.30px" width="10" height="10"><path d="M0.5 9.5h9v-6l-4.5-3.5-4.5 3.5z" fill="#313335" stroke="#6e6e6e"/><path d="M2.5 5h5" stroke="#6e6e6e"/></svg>
<div class="a" style="left:1436px;top:102.50px;line-height:20px;font-size:12.0px;color:#bbbbbb;">Processing…</div>
<div class="a" style="left:1506px;top:230px;width:8px;height:382px;background:#4b4d4d;"></div>
<div class="a" style="left:467px;top:665px;width:1041px;height:8px;background:#4b4d4d;"></div>
<div class="a" style="left:405px;top:673px;width:1110px;height:25px;background:#313335;"></div>
<div class="a" style="left:405px;top:673px;width:1110px;height:1px;background:#37393b;"></div>
<div class="a" style="left:471px;top:676.00px;line-height:20px;font-size:15px;">manifest</div>
<div class="a" style="left:538px;top:675.00px;line-height:20px;font-size:15px;color:#6e7173;">›</div>
<div class="a" style="left:552px;top:676.00px;line-height:20px;font-size:15px;">application</div>
<div class="a" style="left:636px;top:675.00px;line-height:20px;font-size:15px;color:#6e7173;">›</div>
<div class="a" style="left:649px;top:676.00px;line-height:20px;font-size:15px;">activity</div>
<div class="a" style="left:428px;top:703.00px;line-height:20px;font-size:15px;">Text</div>
<div class="a" style="left:415px;top:724px;width:54px;height:3px;background:#8c9196;"></div>
<div class="a" style="left:481px;top:703.00px;line-height:20px;font-size:15px;">Merged Manifest</div>
<div class="a" style="left:1515px;top:74px;width:1px;height:653px;background:#2b2b2b;"></div>
<svg style="left:1519px;top:82px" width="15" height="11" viewBox="0 0 15 11"><path d="M0.3 10.8C0.1 6.5 2 2.8 6.2 2.6C9.5 2.5 11 3.5 12.4 5.5L12 11H10.2L9.7 9.3H6.3L5.8 11H4L3.5 9.5L2.8 11z" fill="#afb1b3"/><path d="M11.2 6.3C13.4 5.2 14.3 3.6 14.1 2C13.9 0.7 12.8 0.5 12.1 1.3" fill="none" stroke="#afb1b3" stroke-width="1.7"/></svg>
<div class="a" style="left:1525px;top:98px;transform-origin:0 0;transform:rotate(90deg);font-size:12.2px;line-height:16px;color:#bbbbbb"><div style="position:relative;top:-8px">Gradle</div></div>
<svg style="left:1519px;top:156px" width="13" height="11" viewBox="0 0 13 11"><rect x="0.7" y="0.7" width="8" height="9.6" rx="1" fill="none" stroke="#afb1b3" stroke-width="1.3"/><rect x="6" y="4" width="6" height="7" fill="#3c3f41" stroke="#afb1b3" stroke-width="1.2"/></svg>
<div class="a" style="left:1525px;top:171px;transform-origin:0 0;transform:rotate(90deg);font-size:12.2px;line-height:16px;color:#bbbbbb"><div style="position:relative;top:-8px">Device Manager</div></div>
<svg style="left:1519px;top:504.5px" width="12" height="12" viewBox="0 0 12 12"><rect x="0.7" y="0.7" width="9" height="10.5" rx="1" fill="none" stroke="#afb1b3" stroke-width="1.3"/></svg>
<div class="a" style="left:1525px;top:520.5px;transform-origin:0 0;transform:rotate(90deg);font-size:12.2px;line-height:16px;color:#bbbbbb"><div style="position:relative;top:-8px">Device File Explorer</div></div>
<svg style="left:1519px;top:651px" width="13" height="13" viewBox="0 0 13 13"><rect x="0.7" y="2.7" width="8" height="9" fill="none" stroke="#afb1b3" stroke-width="1.3"/><rect x="7" y="0.7" width="5" height="7" fill="#3c3f41" stroke="#afb1b3" stroke-width="1.2"/></svg>
<div class="a" style="left:1525px;top:668px;transform-origin:0 0;transform:rotate(90deg);font-size:12.2px;line-height:16px;color:#bbbbbb"><div style="position:relative;top:-8px">Emulator</div></div>
<div class="a" style="left:0px;top:727px;width:1536px;height:1px;background:#323232;"></div>
<svg style="left:34px;top:732.5px" width="11" height="12"><circle cx="2.5" cy="2" r="1.8" fill="#afb1b3"/><circle cx="9" cy="2" r="1.8" fill="#afb1b3"/><path d="M2.5 2v10M9 2c0 4-6.5 3-6.5 7" stroke="#afb1b3" stroke-width="1.6" fill="none"/></svg>
<div class="a" style="left:49px;top:728.50px;line-height:20px;font-size:12.2px;">Version Control</div>
<svg style="left:157px;top:733.0px" width="11" height="11"><path d="M0 1.5h2M0 5.5h2M0 9.5h2M3.5 1.5h7M3.5 5.5h7M3.5 9.5h7" stroke="#afb1b3" stroke-width="1.8"/></svg>
<div class="a" style="left:172px;top:728.50px;line-height:20px;font-size:12.2px;">TODO</div>
<svg style="left:225px;top:733.0px" width="11" height="11"><path d="M0 1.5h11M0 5.5h8M0 9.5h11" stroke="#afb1b3" stroke-width="1.8"/></svg>
<div class="a" style="left:241px;top:728.50px;line-height:20px;font-size:12.2px;">Logcat</div>
<svg style="left:300px;top:733.0px" width="11" height="11"><circle cx="5.5" cy="5.5" r="5.5" fill="#afb1b3"/><path d="M5.5 2v4.5M5.5 8v1.5" stroke="#3c3f41" stroke-width="1.6"/></svg>
<div class="a" style="left:316px;top:728.50px;line-height:20px;font-size:12.2px;">Problems</div>
<svg style="left:388px;top:733.5px" width="13" height="10"><path d="M0.5 10A6 6 0 0 1 12.5 10H10A3.5 3.5 0 0 0 3 10z" fill="#afb1b3"/><path d="M6.5 10L9.5 4.5" stroke="#3c3f41" stroke-width="1.6"/><path d="M6.5 10L9 5.5" stroke="#afb1b3" stroke-width="0.9"/></svg>
<div class="a" style="left:404.5px;top:728.50px;line-height:20px;font-size:12.2px;">Profiler</div>
<svg style="left:469px;top:732.5px" width="11" height="12"><path d="M2 3a3.5 3 0 0 1 7 0v4H2z M0 7h11v2H0z M1.5 9h8v3h-8z" fill="#afb1b3"/></svg>
<div class="a" style="left:484px;top:728.50px;line-height:20px;font-size:12.2px;">App Inspection</div>
<svg style="left:586px;top:733.0px" width="12" height="11"><rect width="12" height="11" fill="#afb1b3"/><path d="M2 2.5l3 2.5-3 2.5M6 8.5h4" stroke="#3c3f41" stroke-width="1.3" fill="none"/></svg>
<div class="a" style="left:602px;top:728.50px;line-height:20px;font-size:12.2px;">Terminal</div>
<svg style="left:669px;top:732.0px" width="13" height="13"><path d="M0.5 4L4 0.5l2.5 2.5L3 6.5z" fill="#afb1b3"/><path d="M5 5l7 7" stroke="#afb1b3" stroke-width="2"/></svg>
<div class="a" style="left:686px;top:728.50px;line-height:20px;font-size:12.2px;">Build</div>
<svg style="left:1303px;top:732.5px" width="12" height="12"><circle cx="6" cy="6" r="6" fill="#499c54"/><text x="3.8" y="9.5" font-size="8.5" fill="#fff" font-family="Liberation Sans" font-weight="bold">1</text></svg>
<div class="a" style="left:1319.4px;top:728.50px;line-height:20px;font-size:12.2px;">Event Log</div>
<svg style="left:1395px;top:732.0px" width="13" height="13"><rect x="0.6" y="0.6" width="9" height="8" fill="none" stroke="#afb1b3" stroke-width="1.2"/><circle cx="8" cy="8" r="2.8" fill="#3c3f41" stroke="#afb1b3" stroke-width="1.3"/><path d="M10 10l2 2" stroke="#afb1b3" stroke-width="1.5"/></svg>
<div class="a" style="left:1411.7px;top:728.50px;line-height:20px;font-size:12.2px;">Layout Inspector</div>
<div class="a" style="left:0px;top:748px;width:1536px;height:1px;background:#323232;"></div>
<svg style="left:6px;top:752px" width="12" height="12" viewBox="0 0 12 12"><rect x="3" y="0.6" width="8.4" height="8.4" fill="none" stroke="#afb1b3" stroke-width="1.2"/><path d="M0.6 3v8.4H9" fill="none" stroke="#afb1b3" stroke-width="1.2"/></svg>
<div class="a" style="left:26.6px;top:748.20px;line-height:20px;font-size:14.7px;">Project update recommended: Android Gradle Plugin can be upgraded. (moments ago)</div>
<div class="a" style="left:1209.6px;top:748.20px;line-height:20px;font-size:13.4px;">12:71</div>
<div class="a" style="left:1255px;top:748.20px;line-height:20px;font-size:13.4px;">LF</div>
<div class="a" style="left:1282px;top:748.20px;line-height:20px;font-size:13.4px;color:#77797b;">UTF-8</div>
<svg style="left:1329px;top:753px" width="14" height="10" viewBox="0 0 14 10"><path d="M0.5 5C3 0.5 11 0.5 13.5 5 11 9.5 3 9.5 0.5 5z" fill="none" stroke="#afb1b3" stroke-width="1.4"/><circle cx="7" cy="5" r="2.2" fill="#afb1b3"/></svg>
<div class="a" style="left:1352.8px;top:748.20px;line-height:20px;font-size:13.4px;">4 spaces</div>
<svg style="left:1418px;top:752px" width="12" height="12" viewBox="0 0 12 12"><path d="M1.5 5V3a2.5 2.5 0 0 1 5 0" fill="none" stroke="#afb1b3" stroke-width="1.4"/><rect x="3" y="6" width="8" height="6" fill="#afb1b3"/></svg>
<svg style="left:1443px;top:752px" width="11" height="11" viewBox="0 0 11 11"><path d="M0 0h11v8H5l-3 3V8H0z" fill="#afb1b3"/><path d="M5.5 1.5v3.5M5.5 6v1" stroke="#3c3f41" stroke-width="1.4"/></svg>
<svg style="left:1467px;top:753px" width="10" height="10" viewBox="0 0 10 10"><circle cx="5" cy="5" r="4" fill="none" stroke="#afb1b3" stroke-width="1.4"/><path d="M2 8l6-6" stroke="#afb1b3" stroke-width="1.4"/></svg>
<div class="a" style="left:1481.4px;top:748.20px;line-height:20px;font-size:13.4px;">∅/N/A</div>
<div class="a" style="left:1108px;top:656px;width:401px;height:63px;background:#4c4e50;border:1px solid #555759"></div>
<svg style="left:1118px;top:667px" width="14" height="14" viewBox="0 0 14 14"><circle cx="7" cy="7" r="7" fill="#389fd6"/><path d="M7 6v5M7 3v1.6" stroke="#fff" stroke-width="1.8"/></svg>
<div class="a" style="left:1138.8px;top:665.40px;line-height:20px;font-size:14.6px;color:#cfcfcf;font-weight:bold;">Project update recommended</div>
<div class="a" style="left:1138.8px;top:688.00px;line-height:20px;font-size:14.6px;">Android Gradle Plugin can be <span style="color:#589df6">upgraded</span>.</div>
<div class="a" style="left:475px;top:169px;width:576px;height:401px;border-radius:7px 7px 0 0;box-shadow:0 5px 16px 3px rgba(0,0,0,0.42);background:#1e1f20;overflow:hidden">
<div class="a" style="left:1px;top:1px;width:574px;height:35px;background:#2c2c2c;border-radius:6px 6px 0 0;border-top:1px solid #393939"></div>
<div class="a" style="left:1px;top:36px;width:574px;height:364px;background:#3c3f41"></div>
</div>
<div class="a" style="left:654px;top:177.50px;line-height:20px;font-size:14.4px;color:#e6e6e6;font-weight:bold;">Generate Signed Bundle or APK</div>
<svg style="left:1023.5px;top:177.7px" width="19" height="19" viewBox="0 0 19 19"><circle cx="9.5" cy="9.5" r="9.4" fill="#df4a16"/><path d="M6 6l7 7M13 6l-7 7" stroke="#fff" stroke-width="1.6"/></svg>
<div class="a" style="left:488px;top:217.50px;line-height:20px;font-size:14.9px;"><u>D</u>estination Folder:</div>
<div class="a" style="left:627px;top:216px;width:409px;height:23px;background:#45494a;border:1px solid #646464"></div><div class="a" style="left:631px;top:217px;width:380px;height:21px;overflow:hidden"><div class="a" style="left:-3.9px;top:0;line-height:21px;font-size:15.5px">ome/gmits-ankit/dev/singleproject/example/android/app</div></div>
<svg style="left:1016px;top:222px" width="14" height="11" viewBox="0 0 14 11"><path d="M0 1h5l1.5 1.5h5.5v2H3.5L0 11z" fill="#6e7173"/><path d="M3.5 5h10.5l-3 6H0z" fill="#6e7173"/></svg>
<div class="a" style="left:624px;top:247px;width:415px;height:278px;background:#3c3f41;border:1px solid #2f3133"></div>
<div class="a" style="left:625px;top:287px;width:413px;height:19.5px;background:#2f65ca;"></div>
<div class="a" style="left:626px;top:248.00px;line-height:20px;font-size:14.9px;">debug</div>
<div class="a" style="left:626px;top:267.50px;line-height:20px;font-size:14.9px;">profile</div>
<div class="a" style="left:626px;top:287.00px;line-height:20px;font-size:14.9px;color:#e0e0e0;">release</div>
<div class="a" style="left:517px;top:376.00px;line-height:20px;font-size:14.9px;"><u>B</u>uild Variants:</div>
<div class="a" style="left:663px;top:536px;width:85px;height:23px;background:#4c5052;border:1px solid #5e6060;border-radius:3px;text-align:center;line-height:21px;font-size:14.2px;color:#bbbbbb;font-weight:normal"><u>P</u>revious</div>
<div class="a" style="left:759px;top:536px;width:85px;height:23px;background:#375a82;border:1px solid #4a6f93;border-radius:3px;text-align:center;line-height:21px;font-size:13.8px;color:#dedede;font-weight:bold"><u>F</u>inish</div>
<div class="a" style="left:855px;top:536px;width:85px;height:23px;background:#4c5052;border:1px solid #5e6060;border-radius:3px;text-align:center;line-height:21px;font-size:14.2px;color:#bbbbbb;font-weight:normal">Cancel</div>
<div class="a" style="left:951px;top:536px;width:85px;height:23px;background:#4c5052;border:1px solid #5e6060;border-radius:3px;text-align:center;line-height:21px;font-size:14.2px;color:#bbbbbb;font-weight:normal">Help</div>
</body></html>
